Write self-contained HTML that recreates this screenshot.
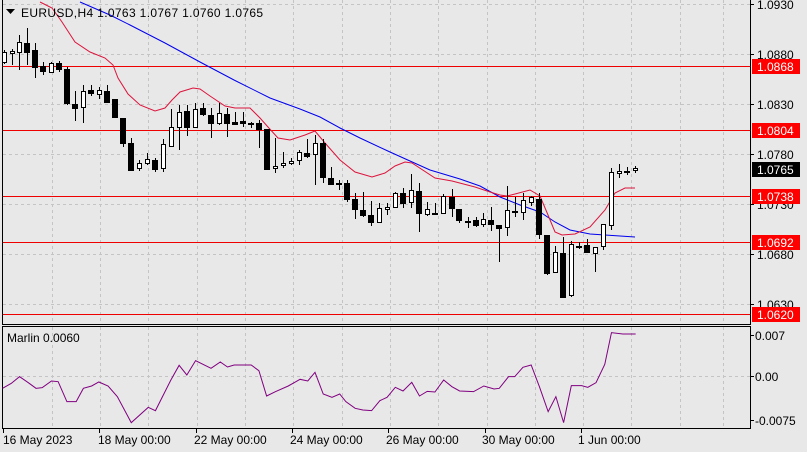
<!DOCTYPE html>
<html><head><meta charset="utf-8"><style>
html,body{margin:0;padding:0;background:#e8e8e8;}
svg{display:block;font-family:"Liberation Sans","DejaVu Sans",sans-serif;}
</style></head><body>
<svg width="807" height="452" viewBox="0 0 807 452" xmlns="http://www.w3.org/2000/svg">
<rect width="807" height="452" fill="#e8e8e8"/>
<g stroke="#c4c4c4" stroke-dasharray="3,3" stroke-width="1" shape-rendering="crispEdges">
<path d="M3 4.5H750M3 54.5H750M3 104.5H750M3 154.5H750M3 204.5H750M3 254.5H750M3 304.5H750"/>
<path d="M52.5 0V323M100.5 0V323M148.5 0V323M197.5 0V323M245.5 0V323M293.5 0V323M342.5 0V323M390.5 0V323M438.5 0V323M487.5 0V323M535.5 0V323M583.5 0V323M631.5 0V323M680.5 0V323M723.5 0V323"/>
<path d="M52.5 327V427M100.5 327V427M148.5 327V427M197.5 327V427M245.5 327V427M293.5 327V427M342.5 327V427M390.5 327V427M438.5 327V427M487.5 327V427M535.5 327V427M583.5 327V427M631.5 327V427M680.5 327V427M723.5 327V427M3 376.5H750"/>
</g>
<g stroke="#ee0000" stroke-width="1" shape-rendering="crispEdges">
<path d="M3 66.5H750M3 130.5H750M3 196.5H750M3 242.5H750M3 314.5H750"/>
</g>
<polyline fill="none" stroke="#0000ee" stroke-width="1" points="80,2 110,15 130,25 165,43 200,62 234,80 270,98 300,109 320,117 340,128 360,138 390,152 410,161 430,170 460,179 480,186 500,197 520,205 540,212 555,222 570,230 590,234 605,235 635,237"/>
<polyline fill="none" stroke="#dc143c" stroke-width="1" points="40,2 52,8 62,22 75,42 90,52 105,58 113,65 118,78 128,94 140,105 155,111 165,108 172,100 180,92 193,88 200,89 210,96 225,106 235,108 250,108 260,118 268,127 278,138 290,140 305,135 315,131 325,143 340,160 355,172 372,177 385,173 395,166 405,162 412,163 435,178 452,181 475,187 490,192 500,195 507,196 515,194 530,190 540,196 548,215 555,232 562,235 575,234 590,227 605,210 615,193 625,188 635,188"/>
<g stroke="#000" stroke-width="1" shape-rendering="crispEdges">
<path d="M4.5 50V64M12.5 49V65M19.5 35V70M27.5 28V65M35.5 43V78M43.5 62V75M51.5 62V73M59.5 61V72M67.5 67V105M75.5 91V121M83.5 85V123M91.5 85V96M99.5 87V99M107.5 85V102M115.5 99V118M123.5 118V147M131.5 138V171M139.5 160V171M147.5 153V165M155.5 158V172M163.5 139V172M171.5 109V146M179.5 105V150M187.5 105V136M195.5 103V128M203.5 103V116M211.5 108V138M219.5 103V125M227.5 108V137M235.5 112V125M243.5 112V127M251.5 122V128M259.5 120V148M267.5 129V169M275.5 138V173M283.5 152V168M291.5 158V165M299.5 150V165M307.5 139V158M315.5 135V185M323.5 139V183M331.5 167V185M339.5 180V190M347.5 180V202M355.5 193V219M363.5 192V217M371.5 201V226M379.5 203V223M387.5 203V215M395.5 192V208M403.5 188V208M411.5 174V208M419.5 183V232M427.5 202V216M435.5 203V215M443.5 194V214M452.5 189V217M459.5 209V223M468.5 217V228M476.5 217V227M483.5 213V227M491.5 207V231M499.5 225V262M507.5 186V236M515.5 197V217M523.5 193V220M531.5 196V206M539.5 193V239M547.5 235V275M555.5 246V273M563.5 237V297M571.5 241V297M579.5 242V249M587.5 239V253M595.5 247V272M603.5 224V250M611.5 168V230M619.5 164V178M627.5 167V175M635.5 166V173"/>
<g fill="#fff">
<rect x="2.5" y="52.5" width="4" height="10"/><rect x="10.5" y="51.5" width="4" height="2"/><rect x="17.5" y="42.5" width="4" height="10"/><rect x="49.5" y="63.5" width="4" height="9"/><rect x="81.5" y="91.5" width="4" height="16"/><rect x="97.5" y="90.5" width="4" height="4"/><rect x="137.5" y="163.5" width="4" height="5"/><rect x="145.5" y="159.5" width="4" height="4"/><rect x="161.5" y="144.5" width="4" height="24"/><rect x="169.5" y="127.5" width="4" height="19"/><rect x="177.5" y="112.5" width="4" height="15"/><rect x="193.5" y="109.5" width="4" height="18"/><rect x="217.5" y="113.5" width="4" height="10"/><rect x="273.5" y="166.5" width="4" height="2"/><rect x="281.5" y="163.5" width="4" height="2"/><rect x="289.5" y="161.5" width="4" height="2"/><rect x="297.5" y="152.5" width="4" height="8"/><rect x="313.5" y="143.5" width="4" height="11"/><rect x="377.5" y="208.5" width="4" height="14"/><rect x="385.5" y="207.5" width="4" height="2"/><rect x="393.5" y="193.5" width="4" height="14"/><rect x="409.5" y="190.5" width="4" height="12"/><rect x="425.5" y="209.5" width="4" height="5"/><rect x="441.5" y="196.5" width="4" height="17"/><rect x="481.5" y="219.5" width="4" height="5"/><rect x="505.5" y="210.5" width="4" height="17"/><rect x="521.5" y="200.5" width="4" height="12"/><rect x="529.5" y="197.5" width="4" height="5"/><rect x="553.5" y="252.5" width="4" height="20"/><rect x="569.5" y="244.5" width="4" height="51"/><rect x="593.5" y="247.5" width="4" height="6"/><rect x="601.5" y="224.5" width="4" height="22"/><rect x="609.5" y="172.5" width="4" height="53"/><rect x="617.5" y="171.5" width="4" height="2"/><rect x="633.5" y="168.5" width="4" height="2"/>
</g>
<g fill="#000">
<rect x="24.5" y="43.5" width="5" height="9"/><rect x="32.5" y="50.5" width="5" height="17"/><rect x="40.5" y="66.5" width="5" height="5"/><rect x="56.5" y="63.5" width="5" height="6"/><rect x="64.5" y="69.5" width="5" height="34"/><rect x="72.5" y="104.5" width="5" height="4"/><rect x="88.5" y="90.5" width="5" height="3"/><rect x="104.5" y="91.5" width="5" height="11"/><rect x="112.5" y="99.5" width="5" height="18"/><rect x="120.5" y="118.5" width="5" height="25"/><rect x="128.5" y="143.5" width="5" height="27"/><rect x="152.5" y="160.5" width="5" height="9"/><rect x="184.5" y="111.5" width="5" height="16"/><rect x="200.5" y="108.5" width="5" height="6"/><rect x="208.5" y="115.5" width="5" height="8"/><rect x="224.5" y="114.5" width="5" height="9"/><rect x="232.5" y="122.5" width="5" height="2"/><rect x="240.5" y="121.5" width="5" height="2"/><rect x="248.5" y="123.5" width="5" height="1"/><rect x="256.5" y="123.5" width="5" height="6"/><rect x="264.5" y="129.5" width="5" height="40"/><rect x="304.5" y="153.5" width="5" height="3"/><rect x="320.5" y="143.5" width="5" height="34"/><rect x="328.5" y="178.5" width="5" height="6"/><rect x="336.5" y="183.5" width="5" height="1"/><rect x="344.5" y="183.5" width="5" height="16"/><rect x="352.5" y="199.5" width="5" height="10"/><rect x="360.5" y="210.5" width="5" height="5"/><rect x="368.5" y="215.5" width="5" height="7"/><rect x="400.5" y="193.5" width="5" height="10"/><rect x="416.5" y="191.5" width="5" height="22"/><rect x="432.5" y="213.5" width="5" height="1"/><rect x="449.5" y="197.5" width="5" height="11"/><rect x="456.5" y="209.5" width="5" height="11"/><rect x="465.5" y="221.5" width="5" height="1"/><rect x="473.5" y="220.5" width="5" height="5"/><rect x="488.5" y="220.5" width="5" height="4"/><rect x="496.5" y="225.5" width="5" height="3"/><rect x="512.5" y="211.5" width="5" height="1"/><rect x="536.5" y="199.5" width="5" height="35"/><rect x="544.5" y="235.5" width="5" height="38"/><rect x="560.5" y="253.5" width="5" height="44"/><rect x="576.5" y="246.5" width="5" height="1"/><rect x="584.5" y="245.5" width="5" height="7"/><rect x="624.5" y="171.5" width="5" height="1"/>
</g>
</g>
<g stroke="#000" fill="none" shape-rendering="crispEdges">
<path d="M2.5 0V324.5H750.5V0"/>
<rect x="2.5" y="326.5" width="748" height="102"/>
<path d="M750 4.5H754M750 54.5H754M750 104.5H754M750 154.5H754M750 204.5H754M750 254.5H754M750 304.5H754M750 335.5H754M750 376.5H754M750 420.5H754"/>
<path d="M3.5 428V433M99.5 428V433M196.5 428V433M292.5 428V433M388.5 428V433M485.5 428V433M581.5 428V433"/>
</g>
<g transform="translate(0,320) scale(0.5147,0.3333)">
<polyline fill="none" stroke="#800080" stroke-width="1" vector-effect="non-scaling-stroke" points="5,205 22,190 38,170 55,188 70,205 82,203 100,183 113,185 130,245 148,245 162,205 178,198 192,186 210,198 228,230 255,308 288,262 302,272 332,180 348,136 363,165 380,122 410,145 428,126 442,141 455,135 488,135 503,152 518,228 535,215 560,198 583,178 598,183 612,157 628,222 645,232 660,222 672,245 690,265 705,270 722,272 738,242 752,232 768,202 783,213 800,187 815,228 830,214 845,216 862,180 878,200 893,213 920,215 940,198 960,207 970,205 988,170 1000,170 1016,142 1032,135 1048,200 1065,275 1080,230 1095,308 1110,197 1130,197 1142,202 1158,188 1175,133 1188,38 1210,42 1235,42"/>
</g>
<path d="M6 9H15L10.5 14Z" fill="#000"/>
<text x="21" y="17" font-size="12" letter-spacing="0.35" fill="#000">EURUSD,H4  1.0763 1.0767 1.0760 1.0765</text>
<text x="7" y="342" font-size="12" fill="#000">Marlin 0.0060</text>
<g font-size="12" fill="#000">
<text x="757" y="9">1.0930</text>
<text x="757" y="59">1.0880</text>
<text x="757" y="109">1.0830</text>
<text x="757" y="159">1.0780</text>
<text x="757" y="209">1.0730</text>
<text x="757" y="259">1.0680</text>
<text x="757" y="309">1.0630</text>
<text x="755" y="340">0.007</text>
<text x="755" y="381">0.00</text>
<text x="755" y="425">-0.0075</text>
</g>
<g shape-rendering="crispEdges">
<rect x="752" y="59" width="48" height="15" fill="#ff0000"/>
<rect x="752" y="123" width="48" height="15" fill="#ff0000"/>
<rect x="752" y="162" width="48" height="15" fill="#000"/>
<rect x="752" y="189" width="48" height="15" fill="#ff0000"/>
<rect x="752" y="235" width="48" height="15" fill="#ff0000"/>
<rect x="752" y="307" width="48" height="15" fill="#ff0000"/>
</g>
<g font-size="12" fill="#fff">
<text x="757" y="71">1.0868</text>
<text x="757" y="135">1.0804</text>
<text x="757" y="174">1.0765</text>
<text x="757" y="201">1.0738</text>
<text x="757" y="247">1.0692</text>
<text x="757" y="319">1.0620</text>
</g>
<g font-size="12" fill="#000">
<text x="3" y="444">16 May 2023</text>
<text x="98" y="444">18 May 00:00</text>
<text x="194" y="444">22 May 00:00</text>
<text x="290" y="444">24 May 00:00</text>
<text x="386" y="444">26 May 00:00</text>
<text x="482" y="444">30 May 00:00</text>
<text x="578" y="444">1 Jun 00:00</text>
</g>
</svg>
</body></html>
